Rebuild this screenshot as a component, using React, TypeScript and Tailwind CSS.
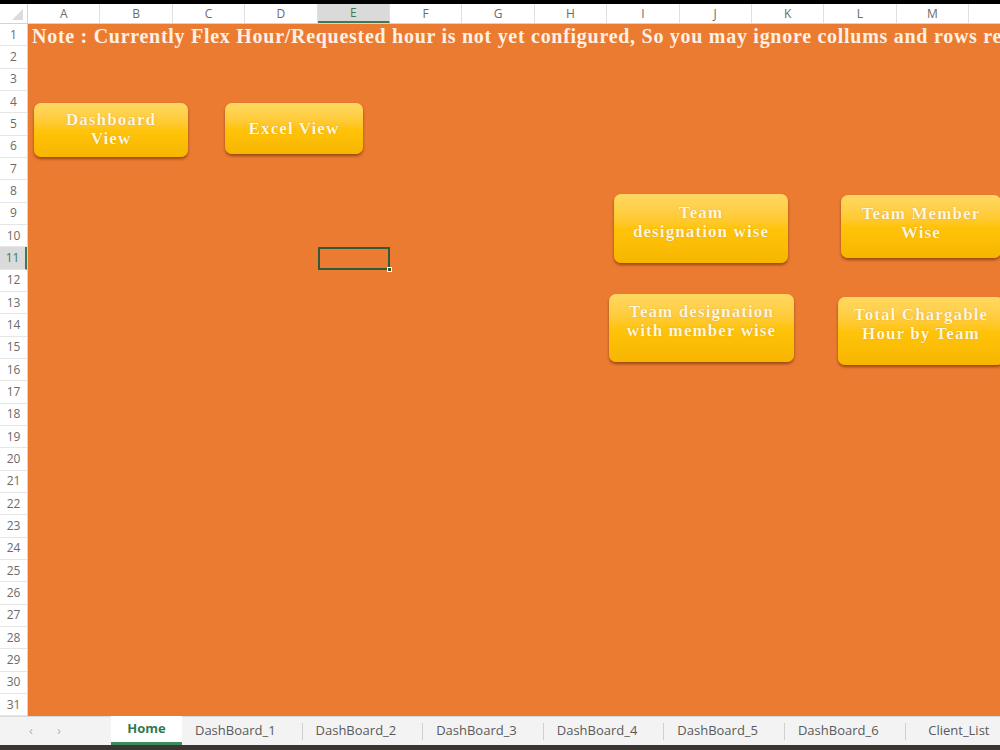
import React from "react";

const COLS = ["A", "B", "C", "D", "E", "F", "G", "H", "I", "J", "K", "L", "M", "N"];
const ROWS = Array.from({ length: 31 }, (_, i) => i + 1);
const TABS = ["DashBoard_1", "DashBoard_2", "DashBoard_3", "DashBoard_4", "DashBoard_5", "DashBoard_6", "Client_List"];

const serif = { fontFamily: '"Liberation Serif", "Times New Roman", serif' };

function Btn({ x, y, w, h, dy, children }: { x: number; y: number; w: number; h: number; dy: number; children: React.ReactNode }) {
  return (
    <div
      className="absolute flex items-center justify-center text-center rounded-[7px] bg-gradient-to-b from-[#ffd862] via-[#ffc40a] to-[#f7b500] shadow-[0_2px_3px_rgba(110,45,0,0.65)] text-[#fff6dc] font-bold text-[17px] leading-[19px] tracking-[1.1px] whitespace-nowrap [text-shadow:0_0_1px_rgba(160,90,0,0.5)]"
      style={{ left: x, top: y, width: w, height: h, ...serif }}
    >
      <div style={{ marginTop: dy }}>{children}</div>
    </div>
  );
}

export default function App() {
  return (
    <div className="w-[1000px] h-[750px] overflow-hidden flex flex-col bg-white" style={{ fontFamily: '"Open Sans", "Noto Sans", sans-serif' }}>
      <div className="h-[4px] bg-black shrink-0" />
      {/* Column headers */}
      <div className="h-[20px] shrink-0 flex bg-white border-b border-[#d4d4d4]">
        <div className="w-[28px] shrink-0 relative border-r border-[#d4d4d4]">
          <div className="absolute right-[4px] bottom-[3px] w-0 h-0 border-l-[11px] border-l-transparent border-b-[11px] border-b-[#dcdcdc]" />
        </div>
        {COLS.map((c) => (
          <div
            key={c}
            className={
              "w-[72.4px] shrink-0 flex items-center justify-center text-[12px] border-r border-[#e0e0e0] " +
              (c === "E" ? "bg-[#dadada] text-[#3f7a56] border-b-2 border-b-[#3f7a56]" : "text-[#6b6b6b]")
            }
          >
            {c}
          </div>
        ))}
      </div>
      {/* Body */}
      <div className="flex-1 flex min-h-0">
        <div className="w-[28px] shrink-0 flex flex-col bg-white border-r border-[#d4d4d4]">
          {ROWS.map((r) => (
            <div
              key={r}
              className={
                "h-[22.33px] shrink-0 flex items-center justify-center text-[12px] border-b border-[#e6e6e6] " +
                (r === 11 ? "bg-[#dadada] text-[#3f7a56] border-r-2 border-r-[#3f7a56]" : "text-[#6b6b6b]")
              }
            >
              {r}
            </div>
          ))}
        </div>
        <div className="flex-1 relative bg-[#ec7b32] overflow-hidden">
          <div
            className="absolute left-[4px] top-0 h-[23px] flex items-center whitespace-nowrap text-[20px] tracking-[0.72px] font-bold text-[#fdf0e4]"
            style={serif}
          >
            Note : Currently Flex Hour/Requested hour is not yet configured, So you may ignore collums and rows related to it
          </div>

          <Btn x={6} y={79} w={154} h={54} dy={-2}>Dashboard<br />View</Btn>
          <Btn x={197} y={79} w={138} h={51} dy={-1}>Excel View</Btn>
          <Btn x={586} y={170} w={174} h={69} dy={-14}>Team<br />designation wise</Btn>
          <Btn x={813} y={171} w={160} h={63} dy={-8}>Team Member<br />Wise</Btn>
          <Btn x={581} y={270} w={185} h={68} dy={-14}>Team designation<br />with member wise</Btn>
          <Btn x={810} y={273} w={166} h={68} dy={-14}>Total Chargable<br />Hour by Team</Btn>

          {/* Selected cell E11 */}
          <div className="absolute left-[289.6px] top-[223.3px] w-[72.6px] h-[22.6px] border-2 border-[#2f5a3c]">
            <div className="absolute -right-[4px] -bottom-[4px] w-[5px] h-[5px] bg-[#2f5a3c] border border-white" />
          </div>
        </div>
      </div>
      {/* Tabs */}
      <div className="h-[29px] shrink-0 flex items-stretch bg-[#f3f3f3] border-t border-[#dadada]">
        <div className="w-[111px] shrink-0 flex items-center text-[#b4b4b4] text-[13px]">
          <span className="ml-[29px]">‹</span>
          <span className="ml-[24px]">›</span>
        </div>
        <div className="w-[71px] shrink-0 flex items-center justify-center bg-white text-[#2f7a4f] font-bold text-[13px] border-b-[3px] border-[#3f8a5e] -mt-px">
          Home
        </div>
        {TABS.map((t, i) => (
          <div key={t} className="w-[120.6px] shrink-0 flex items-center justify-center relative text-[13px] text-[#5a5a5a] pr-[14px]">
            {t}
            {i < TABS.length - 1 && <div className="absolute right-0 top-[6px] bottom-[5px] w-px bg-[#cfcfcf]" />}
          </div>
        ))}
      </div>
      <div className="h-[5px] shrink-0 bg-[#3b3630]" />
    </div>
  );
}
